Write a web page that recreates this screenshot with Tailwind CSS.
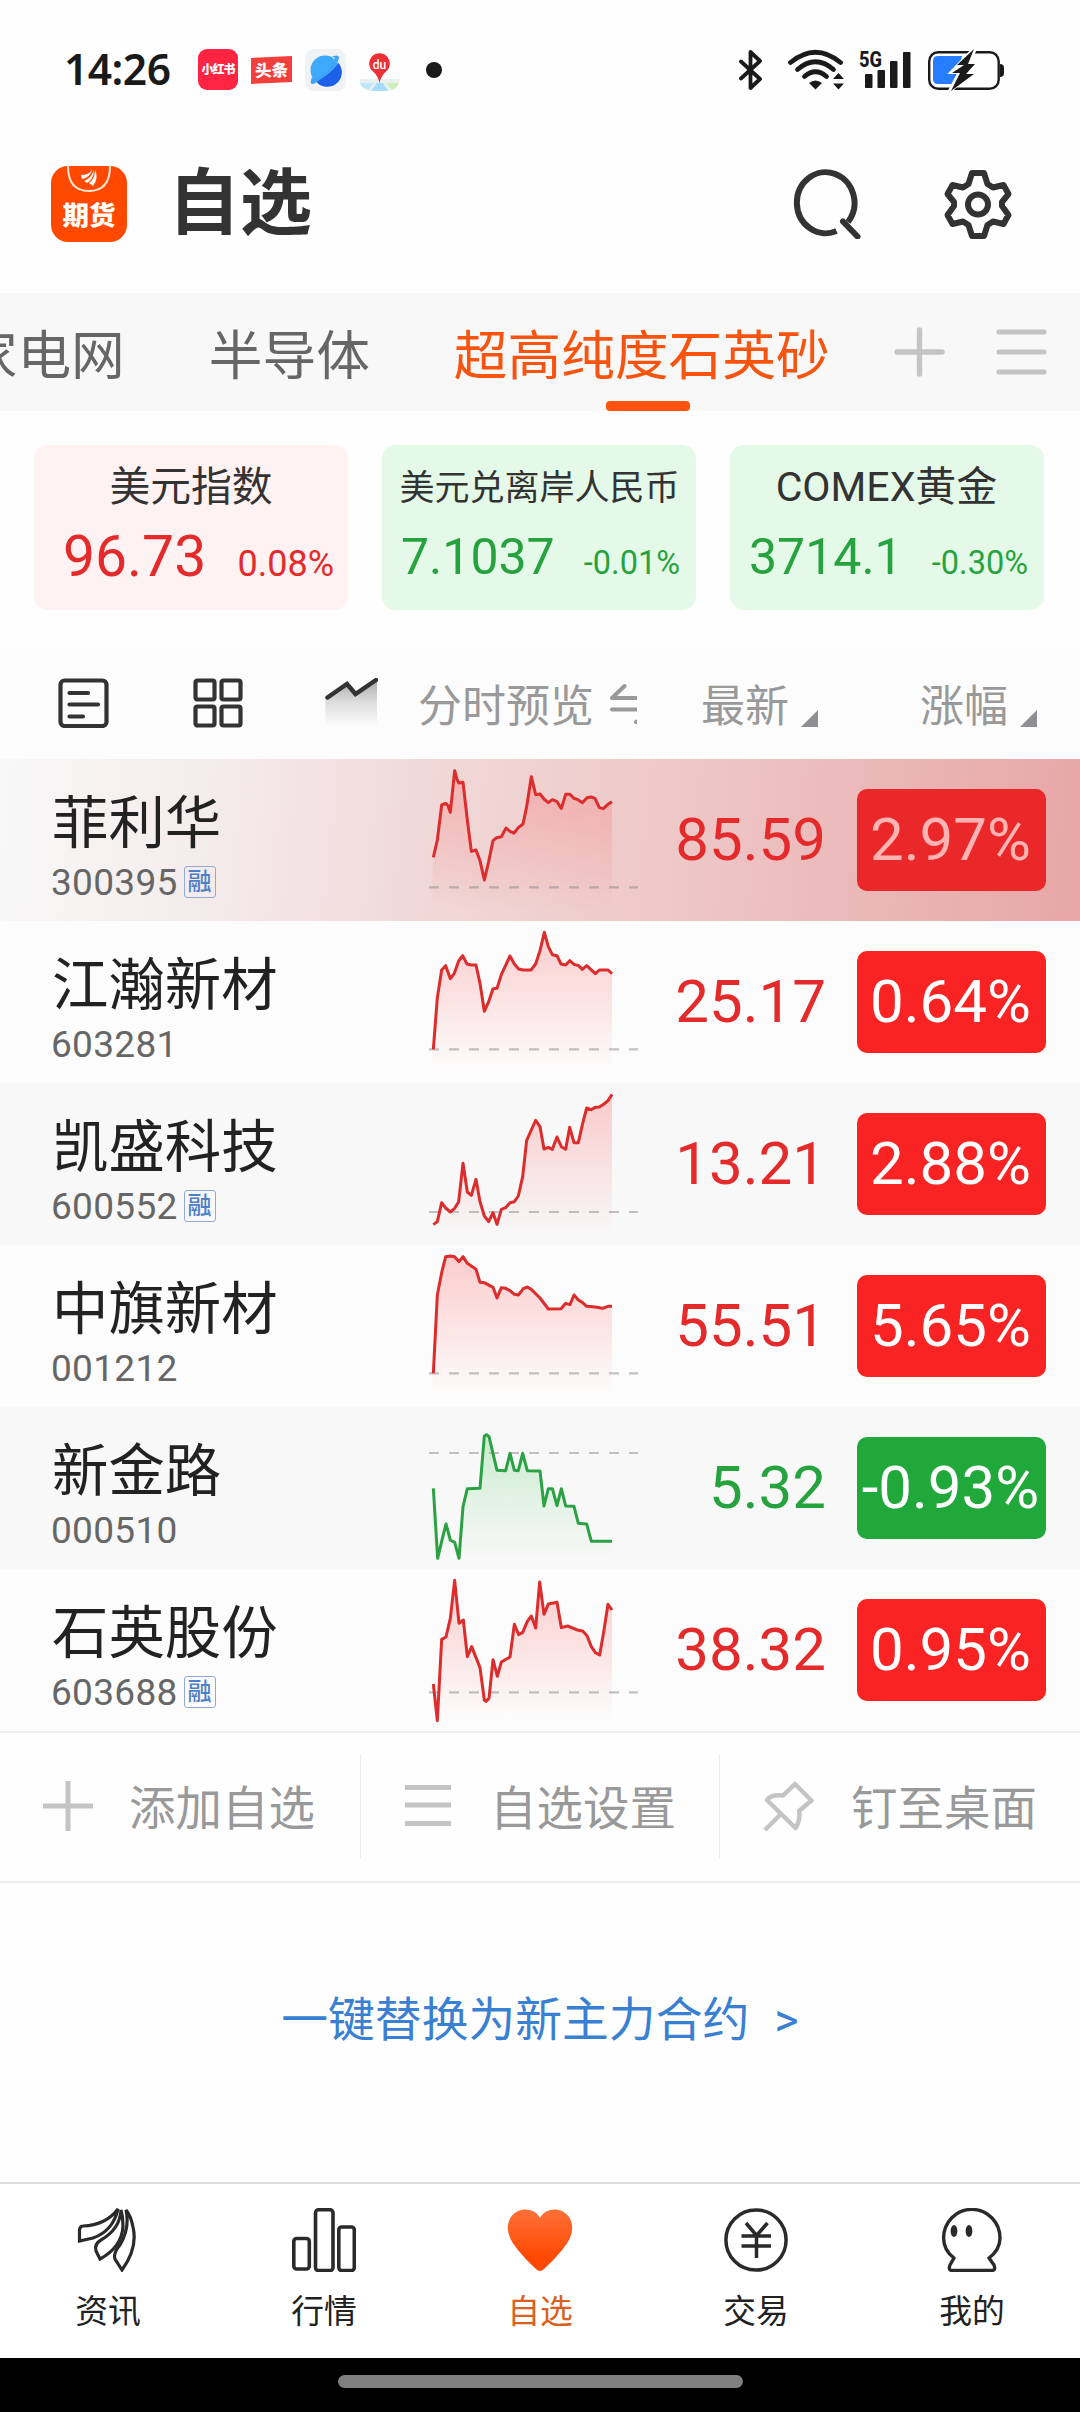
<!DOCTYPE html>
<html lang="zh-CN">
  <head>
    <meta charset="UTF-8" />
    <meta name="viewport" content="width=device-width, initial-scale=1.0" />
    <title>自选</title>
    <script src="https://cdn.jsdelivr.net/npm/@tailwindcss/browser@4"></script>
  </head>
  <body class="w-[1080px] h-[2412px] overflow-hidden bg-[#fefefe] font-['Roboto','Noto_Sans_CJK_SC',sans-serif] text-[#222]">
    <!-- Status bar -->
    <div class="flex h-[141px] items-center pb-[2px] pl-[64px] pr-[76px]">
      <span class="w-[134px] font-['Noto_Sans',sans-serif] text-[42.500px] font-semibold leading-none tracking-[-0.5px] text-[#1a1a1a]">14:26</span>
      <div class="flex h-[41px] w-[40px] items-center justify-center rounded-[9px] bg-[#ff2442] text-[12px] font-black tracking-[-1px] whitespace-nowrap text-white">小红书</div>
      <svg class="ml-[13px] h-[28px] w-[41px]" viewBox="0 0 41 28">
        <path d="M0 2L41 0V26L0 28Z" fill="#f4403c" />
        <text x="20.5" y="20.500" font-size="16.500" font-weight="900" fill="#fff" text-anchor="middle" transform="rotate(-2 20 14)">头条</text>
      </svg>
      <svg class="ml-[13px] h-[42px] w-[41px]" viewBox="0 0 41 42">
        <rect width="41" height="42" rx="9" fill="#f1f2f3" />
        <circle cx="20" cy="21" r="14.5" fill="#3fa9fb" />
        <path d="M33.500 14A14.500 14.500 0 0 1 11 32.500Q25 26 33.500 14Z" fill="#1c5fe8" />
        <path d="M26 8Q33 5 34 8Q35 12 25 22Q12 34 8 35Q4 36 7 28Q9 31 13 29Q28 17 30 9Q29 8 26 8Z" fill="#3fa5f8" />
      </svg>
      <svg class="ml-[13px] h-[42px] w-[41px]" viewBox="0 0 41 42">
        <path d="M0 30H41L39 36Q36 41 29 42H12Q5 41 2 37Z" fill="#e9f0f0" />
        <path d="M1 34L15 34L9 41Q3 39 1 34Z" fill="#bfe6fa" />
        <path d="M18 34H24L29 42H12Z" fill="#a5dcfb" />
        <path d="M27 34H40Q38 39 33 41Z" fill="#cdf0b8" />
        <path d="M20.500 34Q19 27 14 22.500A10.300 10.300 0 1 1 27 22.500Q22 27 20.500 34Z" fill="#ee2f36" />
        <text x="20.500" y="20" font-size="12" font-weight="500" fill="#fff" text-anchor="middle">du</text>
      </svg>
      <span class="ml-[26px] size-[16px] rounded-full bg-[#1a1a1a]"></span>

      <svg class="ml-auto h-[42px] w-[24px]" viewBox="0 0 24 42" fill="none" stroke="#1a1a1a" stroke-width="3.800" stroke-linecap="round" stroke-linejoin="round">
        <path d="M2 12.500L21 30L11.500 39V3L21 12L2 29.500" />
      </svg>
      <svg class="ml-[25px] h-[42px] w-[57px]" viewBox="0 0 57 42">
        <g fill="none" stroke="#1a1a1a" stroke-width="4.800" stroke-linecap="round">
          <path d="M2.500 13.500Q27.500 -7 52.500 13.500" />
          <path d="M9.500 20.500Q27.500 5 45.500 20.500" />
          <path d="M16.500 27.500Q27.500 18 38.500 27.500" />
        </g>
        <path d="M21 34Q27.500 29 34 34L27.500 40.500Z" fill="#1a1a1a" />
        <path d="M45 30L50.500 24L56 30ZM45 34.500L50.500 40.500L56 34.500Z" fill="#1a1a1a" />
      </svg>
      <svg class="ml-[14px] h-[42px] w-[52px]" viewBox="0 0 52 42" fill="#1a1a1a">
        <text x="0" y="18" font-size="21.500" font-weight="800" textLength="23" lengthAdjust="spacingAndGlyphs">5G</text>
        <rect x="6" y="25" width="7.500" height="14" rx="1" />
        <rect x="18.500" y="21" width="7.500" height="18" rx="1" />
        <rect x="31" y="12" width="7.500" height="27" rx="1" />
        <rect x="44" y="3" width="7.500" height="36" rx="1" />
      </svg>
      <svg class="ml-[17px] h-[44px] w-[76px]" viewBox="0 0 76 44">
        <rect x="1.200" y="4.200" width="69.500" height="36.500" rx="9" fill="#fff" stroke="#1a1a1a" stroke-width="2.400" />
        <path d="M72 16Q76 16 76 20V25Q76 29 72 29Z" fill="#1a1a1a" />
        <path d="M10 8H34L27 36H10Q5 36 5 31V13Q5 8 10 8Z" fill="#267dff" />
        <path d="M46 1L24 24H32L22 43L46 20H37L47 1Z" fill="#fff" stroke="#fff" stroke-width="4" />
        <path d="M46 1L29 17H36L24 25H32L23 43L46 26H38L47 16H40Z" fill="#1a1a1a" />
      </svg>
    </div>

    <!-- Title bar -->
    <header class="mb-[26px] flex h-[126px] items-center pl-[51px] pr-[67px]">
      <svg class="size-[76px]" viewBox="0 0 76 76">
        <rect width="76" height="76" rx="17" fill="#ff4900" />
        <path d="M17 0Q17 25 38 25Q59 25 59 0" fill="none" stroke="#ffe9d8" stroke-width="2" />
        <g fill="#fff">
          <path d="M30 9Q39 9 41 3Q40 11 31 13Z" />
          <path d="M33 15Q41 12 43 3Q43 13 36 17Z" />
          <path d="M38 17Q44 13 44 4Q48 12 42 20Z" />
        </g>
        <text x="38" y="59" font-size="26.500" font-weight="900" fill="#fff" text-anchor="middle">期货</text>
      </svg>
      <h1 class="ml-[41px] text-[72px] font-bold leading-none text-[#333]">自选</h1>
      <svg class="ml-auto h-[70px] w-[68px]" viewBox="0 0 68 70" fill="none" stroke="#333" stroke-width="6" stroke-linecap="round">
        <path d="M43.500 62A28.800 30.500 0 1 1 55 53" stroke-linecap="butt" />
        <path d="M50 52.500L64.500 67.500" />
      </svg>
      <svg class="ml-[82px] h-[70px] w-[70px]" viewBox="0 0 70 70" fill="none" stroke="#333" stroke-width="6" stroke-linejoin="round">
        <path d="M29 4H41L44.500 15L50 18.500L60.500 16L65.500 25L59 33V37L65.500 46L60.500 55L50 52.500L44.500 56L41 67H29L25.500 56L20 52.500L9.500 55L4.500 46L11 37V33L4.500 25L9.500 16L20 18.500L25.500 15Z" />
        <circle cx="35" cy="35.500" r="10" />
      </svg>
    </header>

    <!-- Group tabs -->
    <nav class="flex h-[118px] items-center bg-[#f8f8f8] pr-[33px] text-[53.7px] leading-none text-[#666]">
      <div class="flex h-full w-[860px] gap-[84px] overflow-hidden pt-[9px] whitespace-nowrap">
        <span class="-ml-[90px] flex shrink-0 items-center">国家电网</span>
        <span class="flex shrink-0 items-center">半导体</span>
        <span class="relative flex shrink-0 items-center text-[#f8540f]">
          超高纯度石英砂
          <i class="absolute bottom-0 left-[152px] h-[10px] w-[84px] rounded-[4px] bg-[#ff520f]"></i>
        </span>
      </div>
      <svg class="ml-[34px] h-[50px] w-[51px]" viewBox="0 0 51 50" stroke="#c4c4c4" stroke-width="5.400" stroke-linecap="round">
        <path d="M25.500 3V47M3 25H48" />
      </svg>
      <svg class="ml-[51px] h-[50px] w-[51px]" viewBox="0 0 51 50" stroke="#c4c4c4" stroke-width="5.200" stroke-linecap="round">
        <path d="M3 5H48M3 25H48M3 45H48" />
      </svg>
    </nav>

    <!-- Index cards -->
    <section class="mt-[34px] grid h-[165px] grid-cols-3 gap-[34px] pr-[36px] pl-[34px] leading-none">
      <div class="rounded-[14px] bg-[#fff2f2] pt-[22px] pl-[29px] pr-[14px] text-[#e52a2c]">
        <div class="-ml-[15px] text-center text-[40.8px] leading-[40px] text-[#333]">美元指数</div>
        <div class="mt-[21px] flex h-[60px] items-baseline justify-between">
          <span class="text-[57px]">96.73</span><span class="text-[36px]">0.08%</span>
        </div>
      </div>
      <div class="rounded-[14px] bg-[#e4f9e8] pt-[24px] pl-[19px] pr-[16px] text-[#26a33e]">
        <div class="-ml-[2px] text-center text-[35px] leading-[40px] whitespace-nowrap text-[#333]">美元兑离岸人民币</div>
        <div class="mt-[23px] flex h-[60px] items-baseline justify-between">
          <span class="text-[50px]">7.1037</span><span class="text-[32.500px]">-0.01%</span>
        </div>
      </div>
      <div class="rounded-[14px] bg-[#e4f9e8] pt-[22px] pl-[19px] pr-[16px] text-[#26a33e]">
        <div class="-ml-[4px] text-center text-[41px] leading-[40px] text-[#333]">COMEX黄金</div>
        <div class="mt-[25px] flex h-[60px] items-baseline justify-between">
          <span class="text-[50px]">3714.1</span><span class="text-[32.500px]">-0.30%</span>
        </div>
      </div>
    </section>

    <!-- Table header -->
    <div class="mt-[37px] flex h-[112px] items-center bg-[#fcfcfc] pl-[58px] text-[44px] leading-none text-[#999]">
      <svg class="h-[50px] w-[51px]" viewBox="0 0 51 50" fill="none" stroke="#333" stroke-width="4.200" stroke-linecap="round">
        <rect x="2.500" y="2.500" width="46" height="45.500" rx="4" />
        <path d="M11.500 15H30M11.500 26.500H40M11.500 38.500H25" />
      </svg>
      <svg class="ml-[84px] size-[50px]" viewBox="0 0 50 50" fill="none" stroke="#333" stroke-width="4.200">
        <rect x="2.500" y="2.500" width="19" height="19" rx="2" />
        <rect x="28.500" y="2.500" width="19" height="19" rx="2" />
        <rect x="2.500" y="28.500" width="19" height="19" rx="2" />
        <rect x="28.500" y="28.500" width="19" height="19" rx="2" />
      </svg>
      <svg class="ml-[82px] h-[50px] w-[53px]" viewBox="0 0 53 50">
        <defs>
          <linearGradient id="trendFill" x1="0" y1="0" x2="0" y2="1">
            <stop offset="0" stop-color="#333" stop-opacity="0.4" />
            <stop offset="0.500" stop-color="#333" stop-opacity="0.150" />
            <stop offset="1" stop-color="#333" stop-opacity="0" />
          </linearGradient>
        </defs>
        <path d="M.500 21L21 6L30 16L52 2V48H.500Z" fill="url(#trendFill)" />
        <path d="M2.500 19.500L22 6L30.500 16L51 2" fill="none" stroke="#333" stroke-width="4.500" stroke-linecap="round" />
      </svg>
      <div class="ml-[40px] flex w-[219px] items-center overflow-hidden">
        <span class="shrink-0 pt-[8px] leading-[52px]">分时预览</span>
        <svg class="ml-[16px] h-[42px] w-[52px] shrink-0" viewBox="0 0 52 42" fill="none" stroke="#999" stroke-width="4" stroke-linecap="round" stroke-linejoin="round">
          <path d="M14.500 4L2 16H48M2 27.500H48L26 40" />
        </svg>
      </div>
      <div class="ml-[64px] flex items-end">
        <span class="pt-[7px]">最新</span>
        <svg class="mb-[2px] ml-[12px] size-[17px]" viewBox="0 0 17 17" fill="#8e8e93"><path d="M17 0V17H0Z" /></svg>
      </div>
      <div class="ml-[102px] flex items-end">
        <span class="pt-[7px]">涨幅</span>
        <svg class="mb-[2px] ml-[12px] size-[17px]" viewBox="0 0 17 17" fill="#8e8e93"><path d="M17 0V17H0Z" /></svg>
      </div>
    </div>

    <!-- Stock rows -->
    <main id="stockList" class="h-[972px]"></main>

    <!-- List actions -->
    <div class="flex h-[152px] items-center border-y-2 border-[#ededed] pb-[2px] text-[46.500px] leading-none text-[#999]">
      <div class="flex h-[104px] w-[361px] items-center border-r border-[#ededed] pl-[43px]">
        <svg class="size-[50px]" viewBox="0 0 50 50" stroke="#c4c4c4" stroke-width="5"><path d="M25 0V50M0 25H50" /></svg>
        <span class="ml-[36px] pt-[7px]">添加自选</span>
      </div>
      <div class="flex h-[104px] w-[359px] items-center border-r border-[#ededed] pl-[44px]">
        <svg class="h-[50px] w-[46px]" viewBox="0 0 46 50" stroke="#c4c4c4" stroke-width="5"><path d="M0 6.500H46M0 24H46M0 42.500H46" /></svg>
        <span class="ml-[39px] pt-[7px]">自选设置</span>
      </div>
      <div class="flex h-[104px] items-center pl-[43px]">
        <svg class="size-[51px]" viewBox="0 0 51 51" fill="none" stroke="#c4c4c4" stroke-width="4.500" stroke-linejoin="round">
          <path d="M32 3L48.500 19.500L36 30Q38 38 32.500 47L4 19Q8 13 20 14.500ZM18 33L2 49" />
        </svg>
        <span class="ml-[37px] pt-[7px]">钉至桌面</span>
      </div>
    </div>

    <!-- Contract switch link -->
    <div class="flex h-[299px] items-center justify-center pb-[24px] text-[46.8px] leading-none text-[#3a80d2]">
      <span>一键替换为新主力合约</span>
      <span class="ml-[25px]">&gt;</span>
    </div>

    <!-- Bottom tabs -->
    <nav class="grid h-[176px] grid-cols-5 border-t-2 border-[#dedede] bg-white pt-[24px] text-[32.800px] leading-[32px]">
      <div class="flex flex-col items-center gap-[24px]">
        <svg class="size-[64px]" viewBox="0 0 64 64" fill="none" stroke="#2a2a2a" stroke-width="3.200">
          <path d="M42 1Q30 17 7 18Q4 18 3.500 22V33L17 30Q37 23 42 1Z" />
          <path d="M45 2Q44 21 25 32Q18 36 20 43L24 51Q46 39 47 18Q47 9 45 2Z" />
          <path d="M50 2Q54 20 44 37Q37 45 39 51L46 62Q62 40 57 19Q55 8 50 2Z" />
        </svg>
        <span>资讯</span>
      </div>
      <div class="flex flex-col items-center gap-[24px]">
        <svg class="size-[64px]" viewBox="0 0 64 64" fill="none" stroke="#2a2a2a" stroke-width="3.600">
          <rect x="1.800" y="30.500" width="15.500" height="30.500" rx="3" />
          <rect x="23.500" y="1.800" width="17.500" height="60.800" rx="3" />
          <rect x="46.800" y="19" width="15.500" height="43.600" rx="3" />
        </svg>
        <span>行情</span>
      </div>
      <div class="flex flex-col items-center gap-[24px] text-[#d9601d]">
        <svg class="h-[64px] w-[66px]" viewBox="0 0 66 64">
          <defs>
            <linearGradient id="heartFill" x1="0" y1="0" x2="0" y2="1">
              <stop offset="0" stop-color="#ff7038" />
              <stop offset="0.800" stop-color="#ff4800" />
            </linearGradient>
          </defs>
          <path d="M33 10C27 -1 11 -1 4 9C-2 18 1 29 8 38C15 48 24 56 29 61Q33 65 37 61C42 56 51 48 58 38C65 29 68 18 62 9C55 -1 39 -1 33 10Z" fill="url(#heartFill)" />
        </svg>
        <span>自选</span>
      </div>
      <div class="flex flex-col items-center gap-[24px]">
        <svg class="size-[64px]" viewBox="0 0 64 64" fill="none" stroke="#2a2a2a" stroke-width="3.500">
          <circle cx="32" cy="32" r="30.100" />
          <path d="M22 15L32.500 27.500L43.500 15M32.500 27V50M17.500 28H47M17.500 38H47" />
        </svg>
        <span>交易</span>
      </div>
      <div class="flex flex-col items-center gap-[24px]">
        <svg class="size-[64px]" viewBox="0 0 64 64" fill="none" stroke="#2a2a2a" stroke-width="3.400" stroke-linejoin="round">
          <path d="M14 50C6 44 3.600 37 3.600 30A28 28.400 0 0 1 60 30C60 37 57 44 49 50L54 57Q56 62.400 52 62.400H12Q8 62.400 10 57Z" />
          <ellipse cx="14" cy="23" rx="3.400" ry="6" fill="#2a2a2a" stroke="none" />
          <ellipse cx="29" cy="23" rx="3.400" ry="6" fill="#2a2a2a" stroke="none" />
        </svg>
        <span>我的</span>
      </div>
    </nav>

    <!-- Gesture bar -->
    <div class="flex h-[54px] justify-center bg-black pt-[17px]">
      <div class="h-[13px] w-[405px] rounded-full bg-[#808080]"></div>
    </div>

    <script>
      // top: y of the row in chart units, base: previous close line
      const stocks = [
        {
          name: "菲利华", code: "300395", margin: true, price: "85.59", change: "2.97%", top: 357, base: 742, active: true,
          points: "100,652 112,600 125,495 137,490 144,497 151,517 164,392 170,415 176,429 189,427 202,540 214,634 228,630 240,662 253,720 266,665 279,602 290,593 304,590 318,564 330,574 342,579 355,563 369,552 380,500 394,410 407,464 420,462 432,477 445,488 457,479 470,484 484,505 497,463 510,463 522,475 534,479 547,488 561,473 573,471 585,475 598,503 610,506 624,493 636,485",
        },
        {
          name: "江瀚新材", code: "603281", price: "25.17", change: "0.64%", top: 843, base: 1228,
          points: "100,1228 112,1073 125,990 137,977 151,1016 163,1000 176,963 188,947 201,972 214,975 228,975 240,1030 253,1114 266,1085 279,1046 291,1045 304,1004 330,948 343,972 356,987 370,990 393,990 407,972 420,932 433,877 445,920 457,944 471,947 483,972 497,975 509,962 522,973 536,977 547,988 560,977 586,1001 598,990 624,990 636,1001",
        },
        {
          name: "凯盛科技", code: "600552", margin: true, price: "13.21", change: "2.88%", top: 39, base: 426,
          points: "100,464 112,455 125,398 137,414 151,426 164,415 176,395 189,280 202,366 214,376 228,328 240,395 253,438 266,455 279,428 291,463 304,418 317,413 330,398 343,395 355,378 368,320 380,211 394,180 407,151 420,170 432,237 445,232 457,238 471,201 484,230 497,238 509,172 522,218 535,218 548,160 560,114 573,119 586,112 598,111 612,102 624,92 636,73",
        },
        {
          name: "中旗新材", code: "001212", price: "55.51", change: "5.65%", top: 525, base: 910,
          points: "100,910 112,675 125,608 137,560 151,558 164,560 177,575 189,560 202,580 214,588 228,598 240,637 253,638 279,652 291,684 304,653 317,655 330,662 343,673 355,675 370,656 382,651 394,658 420,684 445,717 483,716 497,700 510,704 522,675 535,690 547,697 560,709 585,711 608,715 624,709 636,709",
        },
        {
          name: "新金路", code: "000510", price: "5.32", change: "-0.93%", top: 21, base: 159, down: true,
          points: "100,265 113,475 125,424 138,372 151,420 164,427 177,475 189,320 202,266 240,265 253,108 260,104 267,110 291,211 317,212 330,160 343,211 355,212 368,160 382,212 420,213 432,318 445,266 457,266 471,317 484,266 497,318 522,319 535,370 560,372 574,424 636,424",
        },
        {
          name: "石英股份", code: "603688", margin: true, price: "38.32", change: "0.95%", top: 507, base: 877,
          points: "100,852 112,962 125,718 138,711 151,655 164,541 177,670 190,660 202,770 215,740 240,803 253,900 258,904 267,895 279,779 292,829 304,786 330,771 343,673 356,704 368,697 382,664 394,648 407,684 419,546 432,643 445,612 471,607 484,683 503,678 535,691 548,693 561,707 574,740 586,758 599,765 612,690 624,613 636,630",
        },
      ];

      document.getElementById("stockList").innerHTML = stocks
        .map((s, i) => {
          const bg = s.active
            ? "bg-[linear-gradient(96deg,#f8f8f8_0%,#f5eded_18%,#f0dad9_38%,#eec5c5_65%,#e7a6a6_100%)]"
            : i % 2 ? "bg-[#fcfcfc]" : "bg-[#f8f8f8]";
          const priceColor = s.down ? "text-[#26a33e]" : "text-[#e52a2c]";
          const box = s.active
            ? "bg-[#ea2829] text-[#ffb3b3]"
            : s.down ? "bg-[#20a83a] text-white" : "bg-[#fa2323] text-white";
          const line = s.down ? "#2ba144" : "#dc2c2c";
          const fill = s.down ? "#3fc552" : "#fb5050";
          const bottom = s.top + 455;

          return `
            <div class="flex h-[162px] ${bg}">
              <div class="w-[400px] pt-[37px] pl-[52px]">
                <div class="text-[56.4px] leading-[56px]">${s.name}</div>
                <div class="-ml-[1px] mt-[14px] flex h-[32px] items-center text-[37px] leading-none tracking-[0.3px] text-[#666]">
                  ${s.code}
                  ${s.margin ? `<span class="ml-[6px] flex size-[32px] items-center justify-center rounded-[3px] border-[1.500px] border-[#8fa9d8] text-[24px] font-medium tracking-normal text-[#4d80c8]">融</span>` : ""}
                </div>
              </div>
              <svg class="h-[162px] w-[238px]" viewBox="0 ${s.top} 714 486" fill="none">
                <defs>
                  <linearGradient id="fill${i}" gradientUnits="userSpaceOnUse" x1="0" y1="${s.top + 30}" x2="0" y2="${bottom}">
                    <stop offset="0" stop-color="${fill}" stop-opacity="0.28" />
                    <stop offset="1" stop-color="${fill}" stop-opacity="0" />
                  </linearGradient>
                </defs>
                <polygon points="92,${bottom} ${s.points} 636,${bottom}" fill="url(#fill${i})" />
                <path d="M87 ${s.base}H714" stroke="#888" stroke-opacity="0.5" stroke-width="6.5" stroke-dasharray="30 30" />
                <polyline points="${s.points}" stroke="${line}" stroke-width="9" stroke-linejoin="round" />
              </svg>
              <div class="w-[188px] text-right text-[60px] leading-[162px] ${priceColor}">${s.price}</div>
              <div class="mt-[30px] ml-[31px] h-[102px] w-[189px] rounded-[10px] pr-[2px] text-center text-[60px] leading-[102px] ${box}">${s.change}</div>
            </div>`;
        })
        .join("");
    </script>
  </body>
</html>
